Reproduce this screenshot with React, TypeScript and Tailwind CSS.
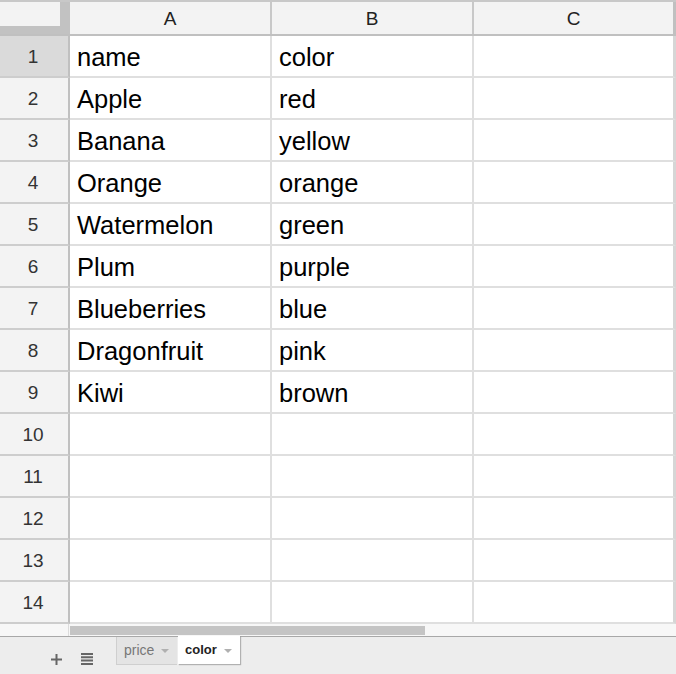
import React from "react";

const columns = ["A", "B", "C"];

const data: string[][] = [
  ["name", "color"],
  ["Apple", "red"],
  ["Banana", "yellow"],
  ["Orange", "orange"],
  ["Watermelon", "green"],
  ["Plum", "purple"],
  ["Blueberries", "blue"],
  ["Dragonfruit", "pink"],
  ["Kiwi", "brown"],
  ["", ""],
  ["", ""],
  ["", ""],
  ["", ""],
  ["", ""],
];

function TabArrow() {
  return (
    <svg width="8" height="4" viewBox="0 0 8 4" className="ml-[7px] mt-[1px]">
      <path d="M0 0 L8 0 L4 4 Z" fill="#b0b0b0" />
    </svg>
  );
}

export default function App() {
  return (
    <div
      className="w-[676px] h-[674px] bg-white overflow-hidden flex flex-col"
      style={{ fontFamily: '"Liberation Sans", Arial, sans-serif' }}
    >
      {/* Column headers */}
      <div className="flex shrink-0 h-[36px] border-t-2 border-b-2 border-t-[#c8c8c8] border-b-[#c0c0c0] bg-[#f3f3f3]">
        {/* Corner with freeze handles */}
        <div className="w-[70px] shrink-0 bg-[#c2c2c2] flex">
          <div className="w-[60px] h-[24px] bg-[#f3f3f3]" />
        </div>
        {columns.map((c, i) => (
          <div
            key={c}
            className={`flex items-center justify-center pt-[3px] text-[19px] text-[#222] ${
              i === 2
                ? "w-[202px] border-r-[3px] border-[#c0c0c0]"
                : "w-[202px] border-r-2 border-[#c8c8c8]"
            }`}
          >
            {c}
          </div>
        ))}
      </div>

      {/* Rows */}
      {data.map((row, r) => (
        <div key={r} className="flex shrink-0 h-[42px]">
          <div
            className={`w-[70px] shrink-0 flex items-center justify-center pt-[3px] pr-[2px] text-[19px] text-[#333] border-r-2 border-b-2 border-r-[#c0c0c0] border-b-[#cdcdcd] ${
              r === 0 ? "bg-[#dadada]" : "bg-[#f3f3f3]"
            }`}
          >
            {r + 1}
          </div>
          {[0, 1, 2].map((c) => (
            <div
              key={c}
              className={`w-[202px] flex items-center pl-[7px] pt-[3px] text-[25.5px] text-black border-b-2 border-[#dfdfdf] ${
                c === 2 ? "border-r-[3px] border-r-[#d6d6d6]" : "border-r-2"
              }`}
            >
              {row[c] ?? ""}
            </div>
          ))}
        </div>
      ))}

      {/* Horizontal scrollbar */}
      <div className="flex shrink-0 h-[13px] bg-[#f7f7f7] border-b border-[#a8a8a8]">
        <div className="w-[69px] shrink-0 border-r border-[#dcdcdc]" />
        <div className="w-[355px] h-[9px] mt-[2px] ml-[1px] bg-[#c4c4c4]" />
      </div>

      {/* Sheet tabs */}
      <div className="h-[37px] shrink-0 bg-[#ededed] flex items-start">
        <div className="flex items-center h-[26px] pl-[51px] mt-[9px]">
          <svg width="11" height="11" viewBox="0 0 11 11">
            <path d="M0 5.5 H11 M5.5 0 V11" stroke="#666" strokeWidth="2" />
          </svg>
          <svg width="12" height="12" viewBox="0 0 12 12" className="ml-[19px]">
            <path d="M0 1 H12 M0 4.3 H12 M0 7.6 H12 M0 11 H12" stroke="#666" strokeWidth="2" />
          </svg>
        </div>
        <div className="ml-[23px] flex">
          <div className="w-[61px] h-[28px] flex items-center pl-[7px] bg-[#e4e4e4] border-l border-b border-[#cfcfcf] text-[14px] text-[#777]">
            price
            <TabArrow />
          </div>
          <div className="w-[62px] h-[28px] -mt-[1px] ml-[1px] flex items-center pl-[7px] bg-white shadow-[1px_1px_1px_rgba(0,0,0,0.25)] text-[13px] font-bold text-[#222]">
            color
            <TabArrow />
          </div>
        </div>
      </div>
    </div>
  );
}
